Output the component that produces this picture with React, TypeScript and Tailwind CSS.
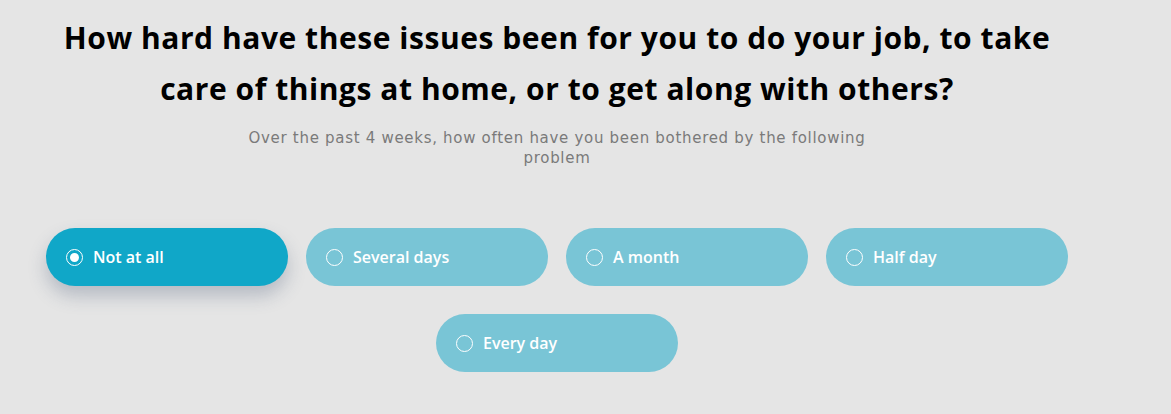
import { useState } from "react";

const OPTIONS = ["Not at all", "Several days", "A month", "Half day", "Every day"];

export default function App() {
  const [picked, setPicked] = useState("Not at all");

  return (
    <div className="min-h-[414px] w-full bg-[#e5e5e5] font-['Open_Sans',sans-serif]">
      <div className="w-[1022px] ml-[46px] pt-[12px] flex flex-col items-center">
        <h1 className="text-center text-[30px] leading-[51px] font-bold text-black whitespace-nowrap tracking-[0.55px]">
          How hard have these issues been for you to do your job, to take
          <br />
          care of things at home, or to get along with others?
        </h1>
        <p className="mt-[14px] w-[650px] text-center text-[15px] leading-[20px] text-[#7a7a7a] tracking-[0.7px] font-['DejaVu_Sans',sans-serif]">
          Over the past 4 weeks, how often have you been bothered by the following problem
        </p>
        <div className="mt-[60px] flex flex-wrap justify-center gap-x-[18px] gap-y-[28px]">
          {OPTIONS.map(o => {
            const on = picked === o;
            return (
              <button
                key={o}
                onClick={() => setPicked(o)}
                className={`w-[242px] h-[58px] rounded-full flex items-center pl-[20px] gap-[10px] text-white text-[16px] font-semibold ${on ? 'bg-[#10a7c8] shadow-[0_10px_18px_rgba(60,80,110,0.28)]' : 'bg-[#79c5d6]'}`}
              >
                <span className="w-[17px] h-[17px] rounded-full border border-white flex items-center justify-center">
                  {on && <span className="w-[9px] h-[9px] rounded-full bg-white" />}
                </span>
                <span>{o}</span>
              </button>
            );
          })}
        </div>
      </div>
    </div>
  );
}
